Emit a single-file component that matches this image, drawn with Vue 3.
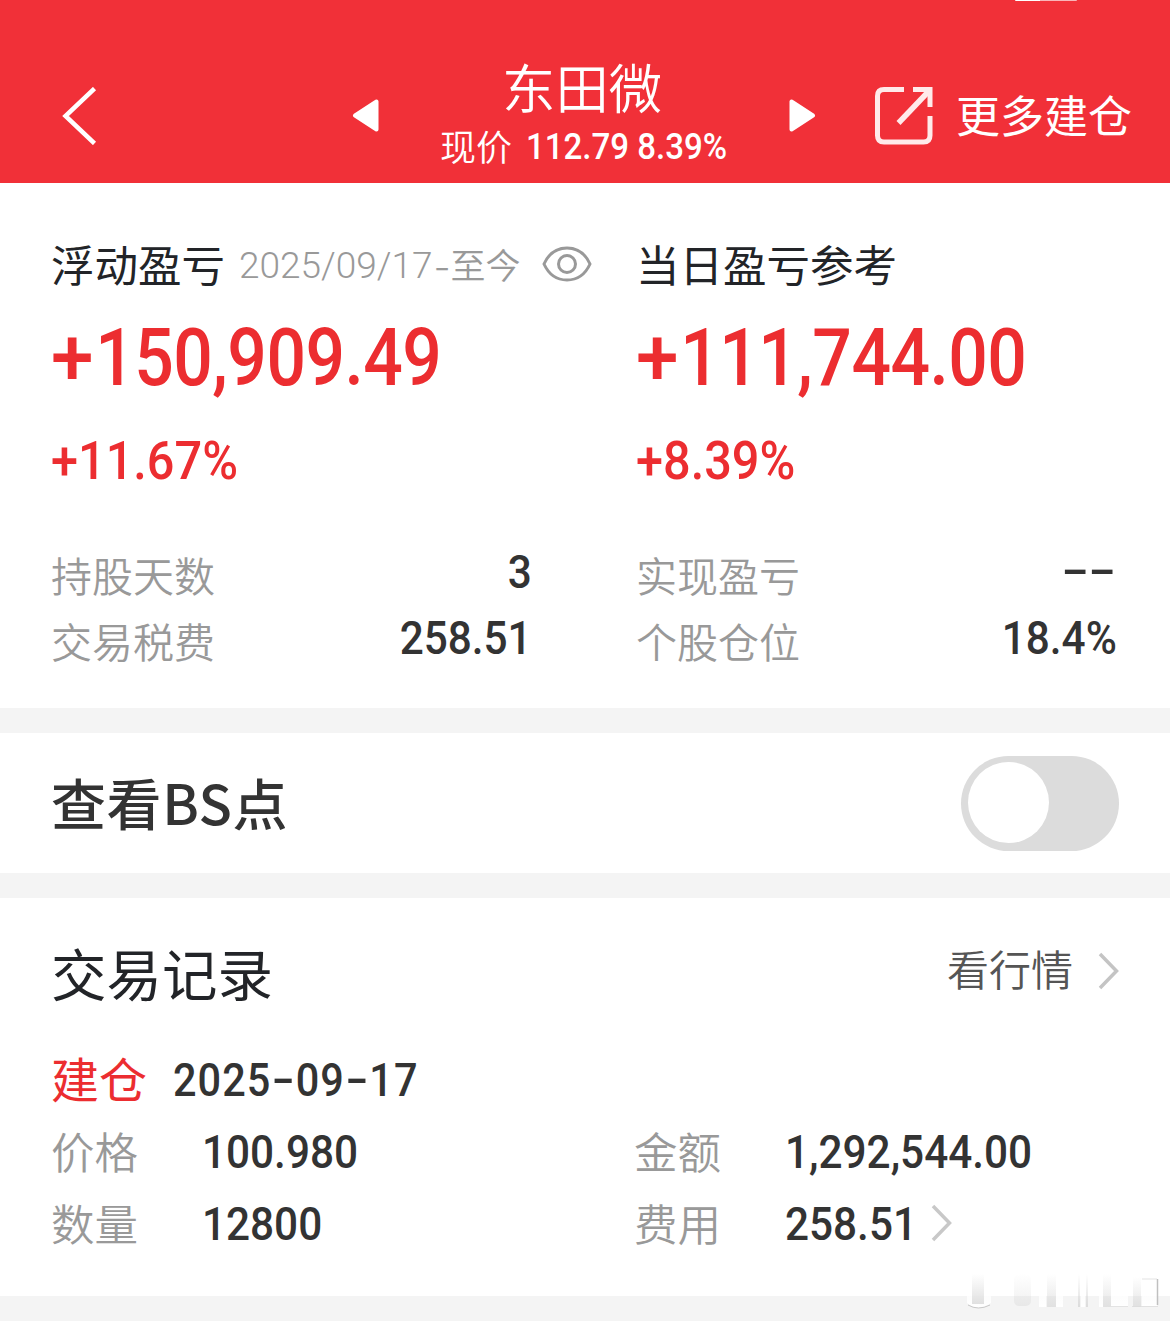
<script setup>
const summary = [
  {
    title: '浮动盈亏',
    range: { dates: '2025/09/17', tail: '至今' },
    amount: '150,909.49',
    percent: '+11.67%',
    rows: [
      { label: '持股天数', value: '3' },
      { label: '交易税费', value: '258.51' },
    ],
  },
  {
    title: '当日盈亏参考',
    amount: '111,744.00',
    percent: '+8.39%',
    rows: [
      { label: '实现盈亏', value: '--', dashes: true },
      { label: '个股仓位', value: '18.4%' },
    ],
  },
]

const details = [
  { label: '价格', value: '100.980' },
  { label: '金额', value: '1,292,544.00' },
  { label: '数量', value: '12800' },
  { label: '费用', value: '258.51', link: true },
]
</script>

<template>
  <div class="page">
    <header class="header">
      <span class="status-pill"></span>
      <svg class="back" width="35" height="58" viewBox="0 0 35 58">
        <path d="M32.5 1.5 3.5 29 32.5 56.5" fill="none" stroke="#fff" stroke-width="4.500" />
      </svg>
      <svg class="prev" width="27" height="34" viewBox="0 0 27 34">
        <path d="M3 16.500 24.500 2.500V30.500Z" fill="#fff" stroke="#fff" stroke-width="4" stroke-linejoin="round" />
      </svg>
      <div class="stock">
        <div class="stock-name">东田微</div>
        <div class="stock-price">
          <span>现价</span>
          <span class="num price-num">112.79 8.39%</span>
        </div>
      </div>
      <svg width="27" height="34" viewBox="0 0 27 34">
        <path d="M24 16.500 2.500 2.500V30.500Z" fill="#fff" stroke="#fff" stroke-width="4" stroke-linejoin="round" />
      </svg>
      <svg class="share" width="58" height="58" viewBox="0 0 58 58">
        <g fill="none" stroke="#ffeaea" stroke-width="5">
          <path d="M29 2.500H9Q2.500 2.500 2.500 9V48.500Q2.500 55 9 55H48.500Q55 55 55 48.500V29" />
          <path d="M38 2.500H55V20" />
          <path d="M53 5 23.500 36" stroke-width="5.500" />
        </g>
      </svg>
      <span class="more">更多建仓</span>
    </header>

    <section class="summary">
      <div v-for="s in summary" :key="s.title" class="card">
        <div class="card-head">
          <span class="card-title">{{ s.title }}</span>
          <template v-if="s.range">
            <span class="range"><span class="range-dates">{{ s.range.dates }}</span><span class="range-dash">-</span><span>{{ s.range.tail }}</span></span>
            <svg class="eye" width="50" height="36" viewBox="0 0 50 36">
              <g fill="none" stroke="#999" stroke-width="3">
                <path d="M2 18C7 7 15 2 25 2S43 7 48 18C43 29 35 34 25 34S7 29 2 18Z" />
                <circle cx="25" cy="18" r="8.500" />
              </g>
            </svg>
          </template>
        </div>
        <div class="num amount"><span class="plus">+</span>{{ s.amount }}</div>
        <div class="num percent">{{ s.percent }}</div>
        <div class="rows">
          <div v-for="r in s.rows" :key="r.label" class="row">
            <span class="label">{{ r.label }}</span>
            <span class="num value" :class="{ dashes: r.dashes }">{{ r.value }}</span>
          </div>
        </div>
      </div>
    </section>

    <section class="switch-row">
      <span class="switch-title">查看BS点</span>
      <span class="toggle"><span class="knob"></span></span>
    </section>

    <section class="records">
      <div class="records-head">
        <span class="records-title">交易记录</span>
        <span class="quote">看行情</span>
        <svg class="quote-arrow" width="21" height="38" viewBox="0 0 21 38">
          <path d="M2 2 18.500 19 2 36" fill="none" stroke="#c4c4c4" stroke-width="3.500" />
        </svg>
      </div>
      <div class="record-open">
        <span class="open-tag">建仓</span>
        <span class="num open-date">2025<span class="dash">-</span>09<span class="dash">-</span>17</span>
      </div>
      <div class="details">
        <div v-for="d in details" :key="d.label" class="detail">
          <span class="detail-label">{{ d.label }}</span>
          <span class="num detail-value">{{ d.value }}</span>
          <svg v-if="d.link" class="fee-arrow" width="21" height="38" viewBox="0 0 21 38">
            <path d="M2 2 18.500 19 2 36" fill="none" stroke="#c8c8c8" stroke-width="3.500" />
          </svg>
        </div>
      </div>
    </section>

    <svg class="watermark" width="210" height="49" viewBox="0 0 210 49">
      <defs>
        <linearGradient id="fade" x1="0" y1="0" x2="0" y2="1">
          <stop offset="0" stop-color="#ccc" stop-opacity="0" />
          <stop offset="1" stop-color="#ccc" stop-opacity=".6" />
        </linearGradient>
        <linearGradient id="glow" x1="0" y1="0" x2="0" y2="1">
          <stop offset="0" stop-color="#fff" stop-opacity=".4" />
          <stop offset="1" stop-color="#fff" />
        </linearGradient>
      </defs>
      <path d="M7 3V31Q18 40 31 31V3Z" fill="url(#glow)" />
      <path d="M8 33Q18 39 30 33" fill="none" stroke="#c8c8c8" />
      <g fill="url(#fade)">
        <rect x="12" y="2" width="12" height="30" />
        <rect x="54" y="2" width="17" height="32" rx="5" opacity=".5" />
        <rect x="87" y="2" width="9" height="33" opacity=".8" />
        <rect x="118" y="2" width="2" height="33" />
        <rect x="126" y="2" width="2" height="33" />
        <rect x="143" y="2" width="8" height="33" opacity=".8" />
        <rect x="173" y="5" width="8" height="30" opacity=".8" />
      </g>
      <g fill="url(#glow)">
        <rect x="79" y="0" width="7" height="35" />
        <rect x="96" y="0" width="7" height="35" />
        <rect x="121" y="0" width="4" height="35" />
        <rect x="139" y="0" width="4" height="35" />
        <rect x="151" y="2" width="17" height="33" />
        <rect x="182" y="7" width="15" height="27" />
      </g>
      <path d="M182 7H197M151 34.500H168M172 34.500H198" fill="none" stroke="#dcdcdc" stroke-opacity=".8" />
      <path d="M197.500 7V33" stroke="#c0c0c0" stroke-width="1.500" />
    </svg>
  </div>
</template>

<style>
body {
  background: #fff;
}
</style>

<style scoped>
.page {
  position: relative;
  width: 1170px;
  height: 1321px;
  overflow: hidden;
  background: #f4f4f4;
  color: #222428;
  font-family: 'Noto Sans CJK SC', sans-serif;
  white-space: nowrap;
}
.page svg {
  display: block;
  flex: none;
}
.num {
  font-family: Roboto, 'Liberation Sans', sans-serif;
  font-weight: 500;
  transform: scaleX(0.9);
  transform-origin: left center;
}

.header {
  position: relative;
  display: flex;
  align-items: center;
  box-sizing: border-box;
  height: 183px;
  padding-top: 48px;
  background: #f13038;
  color: #fff;
}
.status-pill {
  position: absolute;
  left: 1015px;
  top: 0;
  width: 62px;
  height: 1px;
  border-radius: 0 0 8px 8px;
  background: linear-gradient(90deg, #fff 40%, #f9b5b8 40%);
}
.back {
  margin-left: 62px;
}
.prev {
  margin-left: 255px;
}
.stock {
  width: 410px;
  padding-bottom: 10px;
}
.stock-name {
  line-height: 66px;
  margin-bottom: 7px;
  padding-left: 123px;
  font-size: 53.4px;
  font-weight: 350;
}
.stock-price {
  display: flex;
  gap: 14px;
  padding-left: 61px;
  line-height: 38px;
  font-size: 36px;
  font-weight: 350;
}
.price-num {
  line-height: 42px;
  transform: scaleX(0.918);
}
.share {
  margin-left: 59px;
}
.more {
  margin-left: 23px;
  font-size: 44px;
  line-height: 60px;
  padding-bottom: 3px;
}

.summary {
  display: grid;
  grid-template-columns: 585px 585px;
  box-sizing: border-box;
  height: 525px;
  padding-top: 50px;
  background: #fff;
}
.card {
  padding: 0 54px 0 51px;
}
.card-head {
  display: flex;
  align-items: center;
  height: 60px;
}
.card-title {
  padding-top: 1px;
  font-size: 43.5px;
  line-height: 60px;
}
.range {
  display: flex;
  margin-left: 14px;
  padding-top: 6px;
  line-height: 58px;
  font-size: 35px;
  font-weight: 350;
  color: #999;
}
.range-dates {
  font-family: Roboto, sans-serif;
  font-size: 37px;
  font-weight: 300;
  line-height: 62px;
}
.range-dash {
  width: 18px;
  text-align: center;
  transform: scaleX(1.3);
}
.eye {
  margin-left: 21px;
  margin-top: 2px;
}
.amount {
  margin-top: 24px;
  line-height: 82px;
  font-size: 80px;
  letter-spacing: -0.6px;
  color: #ec2d30;
  transform: scaleX(0.87);
}
.plus {
  display: inline-block;
  margin-right: 7px;
  transform: scaleX(1.1);
  transform-origin: left center;
}
.percent {
  margin-top: 31px;
  line-height: 62px;
  font-size: 53px;
  color: #ec2d30;
  transform: scaleX(0.918);
}
.rows {
  margin-top: 47px;
}
.row {
  display: flex;
  justify-content: space-between;
  height: 66px;
  line-height: 70px;
}
.label {
  font-size: 41px;
  font-weight: 350;
  color: #999;
}
.value {
  line-height: 66px;
  font-size: 47px;
  color: #333;
  margin-right: -1px;
  transform-origin: right center;
}
.dashes {
  line-height: 62px;
  margin-right: 0;
  transform: scaleX(1.7);
}

.switch-row {
  display: flex;
  align-items: center;
  justify-content: space-between;
  height: 140px;
  margin: 25px 0;
  padding: 0 51px;
  background: #fff;
}
.switch-title {
  padding-bottom: 5px;
  font-size: 55px;
  font-weight: 500;
  line-height: 70px;
  letter-spacing: 0.6px;
  color: #333;
}
.toggle {
  box-sizing: border-box;
  width: 158px;
  height: 95px;
  padding: 6.5px;
  border-radius: 48px;
  background: #dcdcdc;
}
.knob {
  display: block;
  width: 81px;
  height: 81px;
  border-radius: 50%;
  background: #fff;
}

.records {
  box-sizing: border-box;
  height: 398px;
  padding: 33px 51px 0;
  background: #fff;
}
.records-head {
  display: flex;
  align-items: center;
  height: 80px;
}
.records-title {
  flex: 1;
  padding-top: 1px;
  font-size: 55.5px;
  line-height: 80px;
}
.quote {
  font-size: 42px;
  line-height: 80px;
  padding-bottom: 6px;
  font-weight: 350;
  color: #555;
}
.quote-arrow {
  margin-left: 25px;
}
.record-open {
  display: flex;
  height: 72px;
  margin-top: 32px;
  line-height: 68px;
}
.open-tag {
  width: 122px;
  font-size: 48px;
  color: #ec2d30;
}
.open-date {
  font-size: 46px;
  line-height: 74px;
  color: #333;
  letter-spacing: 1.2px;
}
.dash {
  display: inline-block;
  width: 27px;
  letter-spacing: 0;
  text-align: center;
  transform: scaleX(1.6) translateY(-1px);
}
.details {
  display: grid;
  grid-template-columns: 583px 1fr;
}
.detail {
  display: flex;
  align-items: center;
  height: 72px;
}
.detail-label {
  width: 151px;
  line-height: 72px;
  font-size: 43.5px;
  font-weight: 350;
  color: #999;
}
.detail-value {
  padding-top: 1px;
  line-height: 74px;
  font-size: 47px;
  color: #333;
}
.fee-arrow {
  margin-left: -1px;
}
.watermark {
  position: absolute;
  left: 960px;
  top: 1272px;
}
</style>
